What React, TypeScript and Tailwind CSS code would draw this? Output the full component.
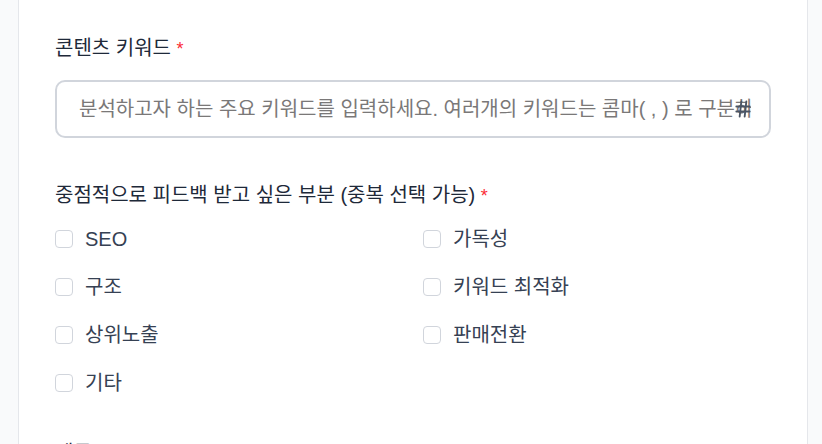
import React from 'react';
import { Hash } from 'lucide-react';

const options = [
    ['SEO', '가독성'],
    ['구조', '키워드 최적화'],
    ['상위노출', '판매전환'],
    ['기타'],
];

const Check = ({ label }: { label: string }) => (
    <label className="flex items-center h-7">
        <input type="checkbox" className="appearance-none w-[18px] h-[18px] rounded-[4px] border border-gray-300 bg-white shrink-0" />
        <span className="ml-3 text-[20px] leading-7 text-gray-700">{label}</span>
    </label>
);

export default function App() {
    return (
        <div
            className="h-[444px] w-[822px] overflow-hidden bg-gray-50 flex"
            style={{ fontFamily: '"Liberation Sans", "Noto Sans CJK KR", sans-serif' }}
        >
            <div className="w-[18px] shrink-0" />
            <div className="w-[790px] shrink-0 bg-white border-x border-gray-200 px-9 pt-[34px]">
                {/* 키워드 */}
                <div className="text-[20px] leading-7 text-gray-800">
                    콘텐츠 키워드 <span className="text-red-500 text-[18px]">*</span>
                </div>
                <div className="relative mt-[17px]">
                    <input
                        className="block w-full h-[58px] rounded-[10px] border-2 border-gray-300 pl-[22px] pr-[18px] text-[20px] placeholder:text-[#7a7878] outline-none"
                        placeholder="분석하고자 하는 주요 키워드를 입력하세요. 여러개의 키워드는 콤마( , ) 로 구분하세요."
                    />
                    <Hash className="absolute right-[18px] top-1/2 -translate-y-1/2 w-[20px] h-[20px] text-gray-600" strokeWidth={2.25} />
                </div>

                {/* 피드백 */}
                <div className="mt-[43px] text-[20px] leading-7 text-gray-800">
                    중점적으로 피드백 받고 싶은 부분 (중복 선택 가능) <span className="text-red-500 text-[18px]">*</span>
                </div>
                <div className="mt-[15px] grid grid-cols-2 gap-x-5 gap-y-5">
                    {options.flat().map((o) => (
                        <Check key={o} label={o} />
                    ))}
                </div>

                <div className="mt-[42px] text-[20px] leading-7 text-gray-800">
                    제목 <span className="text-red-500 text-[18px]">*</span>
                </div>
            </div>
        </div>
    );
}
